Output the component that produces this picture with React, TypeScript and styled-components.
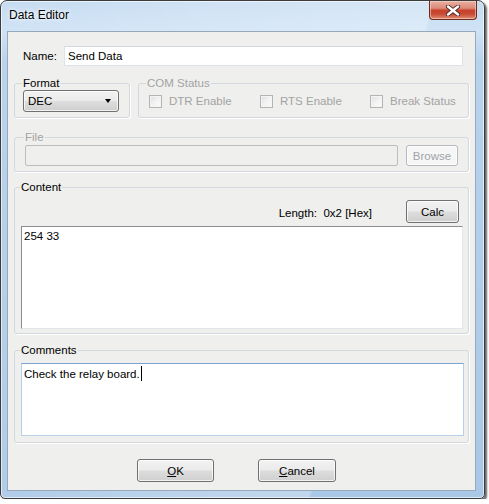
import React from 'react';
import styled, { createGlobalStyle } from 'styled-components';

const Global = createGlobalStyle`
  html, body { margin: 0; padding: 0; background: #ffffff; }
  body { font-family: "Liberation Sans", Arial, sans-serif; font-size: 11.5px; color: #000; }
  * { box-sizing: border-box; }
`;

const Window = styled.div`
  width: 485px;
  height: 499px;
  border: 1px solid #3c3c3c;
  border-radius: 7px 7px 5px 5px;
  background:
    linear-gradient(104deg, rgba(255,255,255,0) 0%, rgba(255,255,255,0.18) 40%, rgba(255,255,255,0.28) 71%, rgba(255,255,255,0) 71.5%),
    linear-gradient(to bottom, #c6dcf1 0px, #d0e3f6 30px, #b9d3ed 60px, #a9c7e6 100%);
  box-shadow: 2px 2px 2px rgba(0, 0, 0, 0.6), inset 0 0 0 1px rgba(255,255,255,0.6);
  display: flex;
  flex-direction: column;
  padding: 0 8px 7px 6px;
`;

const TitleBar = styled.div`
  height: 30px;
  display: flex;
  justify-content: space-between;
  align-items: flex-start;
  flex-shrink: 0;
`;

const Title = styled.div`
  font-size: 12px;
  line-height: 14px;
  padding: 7px 0 0 2px;
  color: #000;
  text-shadow: 0 0 6px rgba(255, 255, 255, 1), 0 0 3px rgba(255,255,255,1);
`;

const CloseButton = styled.div`
  width: 48px;
  height: 19px;
  margin-right: -1px;
  border: 1px solid #6a2a1e;
  border-top: none;
  border-radius: 0 0 4px 4px;
  background: linear-gradient(to bottom, #e8b0a2 0%, #dc8a78 40%, #c7412c 52%, #c84a33 72%, #df8f73 100%);
  box-shadow: inset 0 0 0 1px rgba(255, 220, 210, 0.55);
  display: flex;
  align-items: center;
  justify-content: center;
`;

const Client = styled.div`
  flex: 1;
  border: 1px solid #97a8bb;
  background: #efefed;
  display: flex;
  flex-direction: column;
  padding: 0 6px;
`;

const NameRow = styled.div`
  display: flex;
  align-items: center;
  margin-top: 14px;
  padding-left: 9px;
`;

const Label = styled.span`
  width: 41px;
  line-height: 14px;
`;

const TextInput = styled.div`
  flex: 1;
  height: 20px;
  margin-right: 6px;
  border: 1px solid #dde2e7;
  border-top-color: #d3d8de;
  background: #ffffff;
  padding: 0 3px;
  line-height: 18px;
`;

const GroupRow = styled.div`
  display: flex;
  gap: 8px;
  margin-top: 10px;
`;

const Group = styled.fieldset<{ $w?: number; $fill?: boolean; $pl: number; $pr: number; $pt: number; $pb: number; $mt?: number }>`
  margin: ${p => p.$mt ?? 0}px 0 0 0;
  min-width: 0;
  ${p => (p.$w ? `width: ${p.$w}px; flex-shrink: 0;` : '')}
  ${p => (p.$fill ? 'flex: 1;' : '')}
  border: 1px solid #d3d8dc;
  border-radius: 3px;
  box-shadow: 1px 1px 0 #ffffff;
  padding: ${p => p.$pt}px ${p => p.$pr}px ${p => p.$pb}px ${p => p.$pl}px;
`;

const Legend = styled.legend<{ $disabled?: boolean }>`
  padding: 0 1px;
  margin-left: -1px;
  line-height: 14px;
  font-size: 11.5px;
  color: ${p => (p.$disabled ? '#a3a3a3' : '#000')};
`;

const Combo = styled.div`
  height: 22px;
  border: 1px solid #707070;
  border-radius: 3px;
  background: linear-gradient(to bottom, #f2f2f2 0%, #ebebeb 48%, #dddddd 52%, #cfcfcf 100%);
  box-shadow: inset 0 0 0 1px rgba(255, 255, 255, 0.7);
  display: flex;
  align-items: center;
  justify-content: space-between;
  padding: 0 7px 0 4px;
`;

const Arrow = styled.span`
  width: 0;
  height: 0;
  border-left: 3.5px solid transparent;
  border-right: 3.5px solid transparent;
  border-top: 4px solid #000;
`;

const CheckRow = styled.div`
  display: flex;
  align-items: center;
  height: 20px;
  padding-left: 2px;
`;

const CheckItem = styled.div<{ $w?: number }>`
  display: flex;
  align-items: center;
  gap: 7px;
  ${p => (p.$w ? `width: ${p.$w}px;` : '')}
  color: #a3a3a3;
`;

const CheckBox = styled.span`
  width: 13px;
  height: 13px;
  border: 1px solid #b4b4b4;
  background: linear-gradient(135deg, #dedede 0%, #f2f2f2 50%, #fcfcfc 100%);
  box-shadow: inset 0 0 0 1px #f4f4f4;
`;

const FileRow = styled.div`
  display: flex;
  align-items: center;
  gap: 8px;
`;

const DisabledInput = styled.div`
  flex: 1;
  height: 21px;
  border: 1px solid #bdbdbd;
  border-radius: 2px;
  background: #efefed;
`;

const Button = styled.div<{ $w: number; $disabled?: boolean }>`
  width: ${p => p.$w}px;
  height: ${p => (p.$disabled ? 21 : 23)}px;
  border: 1px solid ${p => (p.$disabled ? '#b5b9bc' : '#707070')};
  border-radius: 3px;
  background: ${p =>
    p.$disabled
      ? '#f6f6f6'
      : 'linear-gradient(to bottom, #f2f2f2 0%, #ebebeb 48%, #dddddd 52%, #cfcfcf 100%)'};
  box-shadow: inset 0 0 0 1px rgba(255, 255, 255, 0.75);
  color: ${p => (p.$disabled ? '#a0a4a7' : '#000')};
  display: flex;
  align-items: center;
  justify-content: center;
  flex-shrink: 0;
  line-height: 14px;
`;

const LengthRow = styled.div`
  display: flex;
  align-items: center;
  justify-content: flex-end;
  gap: 34px;
  margin-right: 4px;
`;

const LengthText = styled.span`
  padding-top: 3px;
  white-space: pre;
`;

const TextArea = styled.div<{ $h: number; $focused?: boolean; $mt?: number }>`
  height: ${p => p.$h}px;
  margin-top: ${p => p.$mt ?? 0}px;
  background: #ffffff;
  border: 1px solid ${p => (p.$focused ? '#b7d0e8' : '#e2e6ea')};
  border-top-color: ${p => (p.$focused ? '#7da2ce' : '#8a8f96')};
  border-left-color: ${p => (p.$focused ? '#b7d0e8' : '#8a8f96')};
  padding: 2px 2px;
  line-height: 14px;
`;

const Caret = styled.span`
  display: inline-block;
  width: 1px;
  height: 15px;
  background: #000;
  vertical-align: -3px;
  margin-left: 1px;
`;

const ButtonRow = styled.div`
  display: flex;
  justify-content: center;
  gap: 44px;
  margin-top: 16px;
  padding-right: 10px;
`;

const CloseIcon = () => (
  <svg width="14" height="11" viewBox="0 0 14 11">
    <path d="M2 1.5 L12 9.5 M12 1.5 L2 9.5" stroke="#4a2a24" strokeWidth="4.2" strokeLinecap="round" />
    <path d="M2 1.5 L12 9.5 M12 1.5 L2 9.5" stroke="#ffffff" strokeWidth="2.4" strokeLinecap="round" />
  </svg>
);

export default function App() {
  return (
    <>
      <Global />
      <Window>
        <TitleBar>
          <Title>Data Editor</Title>
          <CloseButton>
            <CloseIcon />
          </CloseButton>
        </TitleBar>
        <Client>
          <NameRow>
            <Label>Name:</Label>
            <TextInput>Send Data</TextInput>
          </NameRow>
          <GroupRow>
            <Group $w={116} $pl={8} $pr={10} $pt={0} $pb={5}>
              <Legend>Format</Legend>
              <Combo>
                <span>DEC</span>
                <Arrow />
              </Combo>
            </Group>
            <Group $fill $pl={8} $pr={8} $pt={1} $pb={6}>
              <Legend $disabled>COM Status</Legend>
              <CheckRow>
                <CheckItem $w={111}>
                  <CheckBox />
                  <span>DTR Enable</span>
                </CheckItem>
                <CheckItem $w={110}>
                  <CheckBox />
                  <span>RTS Enable</span>
                </CheckItem>
                <CheckItem>
                  <CheckBox />
                  <span>Break Status</span>
                </CheckItem>
              </CheckRow>
            </Group>
          </GroupRow>
          <Group $mt={12} $pl={10} $pr={10} $pt={1} $pb={5}>
            <Legend $disabled>File</Legend>
            <FileRow>
              <DisabledInput />
              <Button $w={52} $disabled>Browse</Button>
            </FileRow>
          </Group>
          <Group $mt={8} $pl={6} $pr={5} $pt={6} $pb={4}>
            <Legend>Content</Legend>
            <LengthRow>
              <LengthText>Length:  0x2 [Hex]</LengthText>
              <Button $w={53}>Calc</Button>
            </LengthRow>
            <TextArea $h={103} $mt={3}>254 33</TextArea>
          </Group>
          <Group $mt={9} $pl={6} $pr={4} $pt={6} $pb={6}>
            <Legend>Comments</Legend>
            <TextArea $h={73} $focused>
              Check the relay board.<Caret />
            </TextArea>
          </Group>
          <ButtonRow>
            <Button $w={77}>
              <span><u>O</u>K</span>
            </Button>
            <Button $w={78}>
              <span><u>C</u>ancel</span>
            </Button>
          </ButtonRow>
        </Client>
      </Window>
    </>
  );
}
